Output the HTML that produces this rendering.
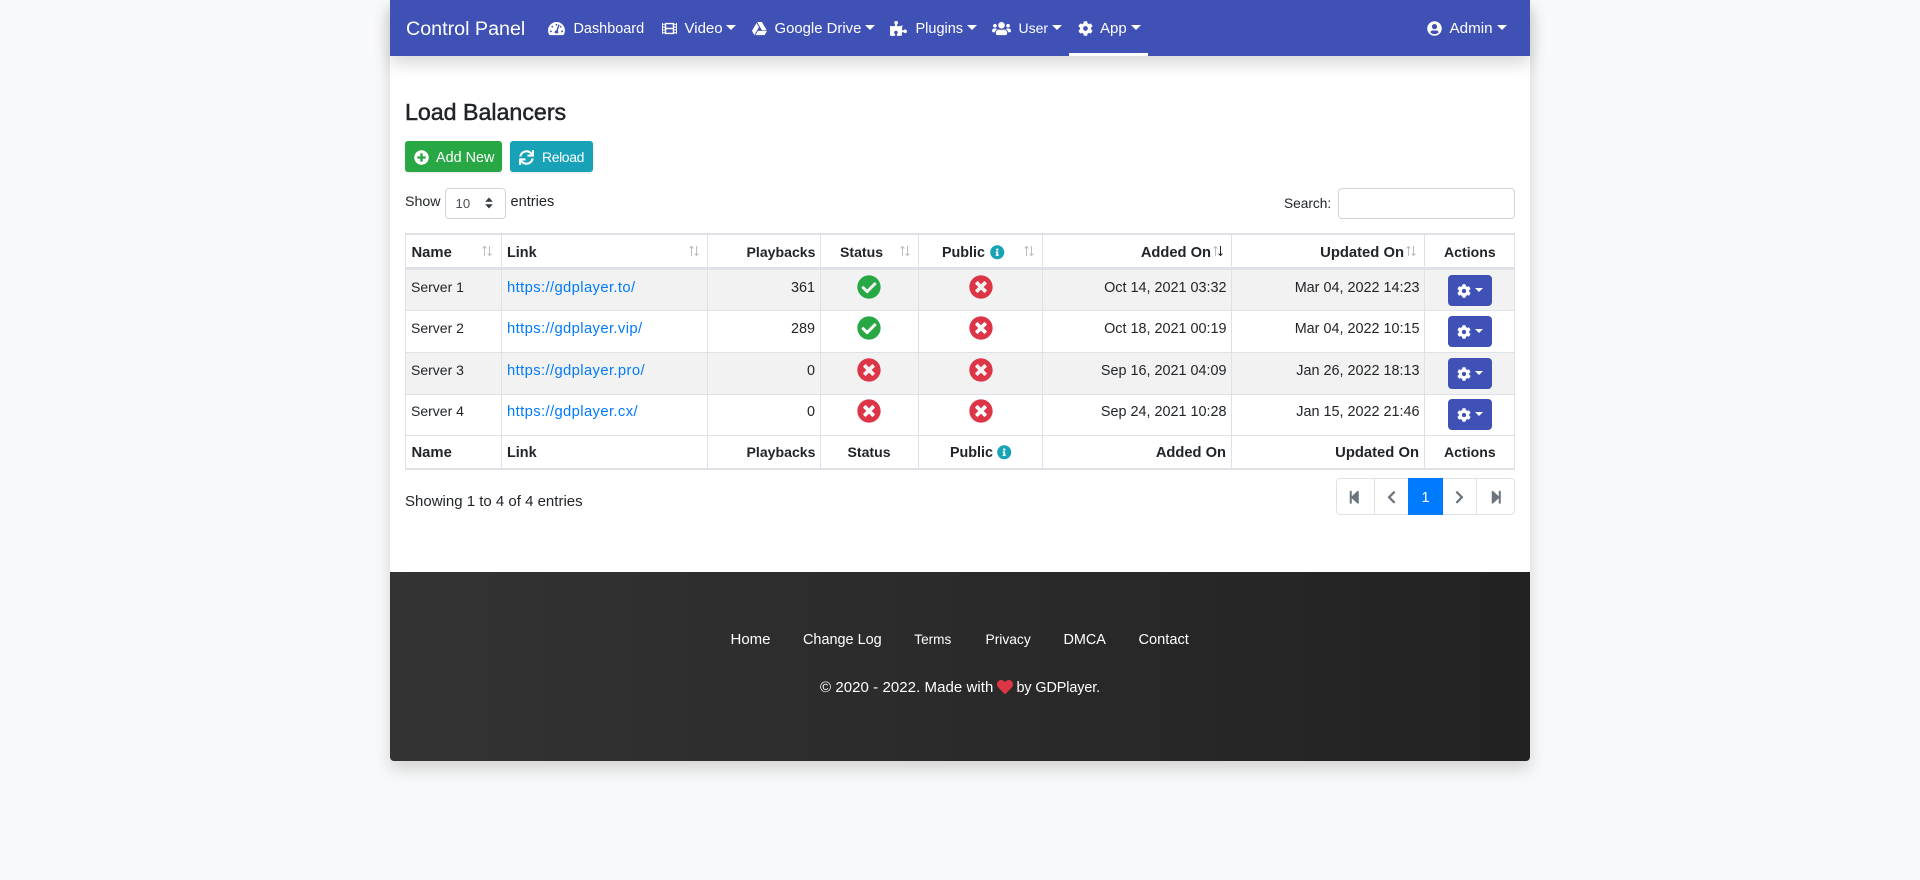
<!DOCTYPE html>
<html lang="en">
<head>
<meta charset="utf-8">
<title>Load Balancers - Control Panel</title>
<style>
html,body{margin:0;padding:0;background:#f8f9fa;width:1920px;height:880px;overflow:hidden;font-family:"Liberation Sans",sans-serif;color:#212529}
#wrap{position:absolute;left:390px;top:0;width:1140px;height:761px;background:#fff;border-radius:0 0 4px 4px;box-shadow:0 8px 16px rgba(0,0,0,.15)}
#nav{position:absolute;left:390px;top:0;width:1140px;height:56px;background:#3f51b5;box-shadow:0 8px 16px rgba(0,0,0,.15)}
#foot{position:absolute;left:390px;top:572px;width:1140px;height:189px;background:linear-gradient(90deg,#333,#222);border-radius:0 0 4px 4px}
.t{position:absolute;white-space:nowrap;line-height:20px;font-size:14px}
.r{text-align:right}
.w{color:#fff}
.b{font-weight:bold;color:#212529}
.l{color:#007bff;font-size:14.8px;letter-spacing:.38px}
.i{position:absolute;overflow:visible}
.c{position:absolute;width:0;height:0;border-left:5px solid transparent;border-right:5px solid transparent;border-top:5px solid #fff}
.s{border-left-width:4.2px;border-right-width:4.2px;border-top-width:4.4px}
.box{position:absolute}
.hl{position:absolute;left:405px;width:1110px;background:#dee2e6}
.vl{position:absolute;top:233px;height:237px;width:1px;background:#dee2e6}
.btn{position:absolute;border-radius:3px;box-shadow:0 1px 2px rgba(0,0,0,.1)}
.act{position:absolute;left:1448px;width:44px;height:31px;background:#3f51b5;border-radius:4px}
</style>
</head>
<body>
<svg width="0" height="0" style="position:absolute"><defs>
<path id="check" d="M504 256c0 136.967-111.033 248-248 248S8 392.967 8 256 119.033 8 256 8s248 111.033 248 248zM227.314 387.314l184-184c6.248-6.248 6.248-16.379 0-22.627l-22.627-22.627c-6.248-6.249-16.379-6.249-22.628 0L216 308.118l-70.059-70.059c-6.248-6.248-16.379-6.248-22.628 0l-22.627 22.627c-6.248 6.248-6.248 16.379 0 22.627l104 104c6.249 6.249 16.379 6.249 22.628.001z"/>
<path id="times" d="M256 8C119 8 8 119 8 256s111 248 248 248 248-111 248-248S393 8 256 8zm121.6 313.1c4.7 4.7 4.7 12.3 0 17L338 377.6c-4.7 4.7-12.3 4.7-17 0L256 312l-65.1 65.6c-4.7 4.7-12.3 4.7-17 0L134.4 338c-4.7-4.7-4.7-12.3 0-17l65.6-65-65.6-65.1c-4.7-4.7-4.7-12.3 0-17l39.6-39.6c4.7-4.7 12.3-4.7 17 0l65 65.7 65.1-65.6c4.7-4.7 12.3-4.7 17 0l39.6 39.6c4.7 4.7 4.7 12.3 0 17L312 256l65.6 65.1z"/>
<path id="plus" d="M256 8C119 8 8 119 8 256s111 248 248 248 248-111 248-248S393 8 256 8zm144 276c0 6.6-5.4 12-12 12h-92v92c0 6.6-5.4 12-12 12h-56c-6.6 0-12-5.4-12-12v-92h-92c-6.6 0-12-5.4-12-12v-56c0-6.6 5.4-12 12-12h92v-92c0-6.6 5.4-12 12-12h56c6.6 0 12 5.4 12 12v92h92c6.6 0 12 5.4 12 12v56z"/>
<path id="info" d="M256 8C119.043 8 8 119.083 8 256c0 136.997 111.043 248 248 248s248-111.003 248-248C504 119.083 392.957 8 256 8zm0 110c23.196 0 42 18.804 42 42s-18.804 42-42 42-42-18.804-42-42 18.804-42 42-42zm56 254c0 6.627-5.373 12-12 12h-88c-6.627 0-12-5.373-12-12v-24c0-6.627 5.373-12 12-12h12v-64h-12c-6.627 0-12-5.373-12-12v-24c0-6.627 5.373-12 12-12h64c6.627 0 12 5.373 12 12v100h12c6.627 0 12 5.373 12 12v24z"/>
<path id="cog" d="M487.4 315.7l-42.6-24.6c4.3-23.2 4.3-47 0-70.2l42.6-24.6c4.9-2.8 7.1-8.6 5.5-14-11.1-35.6-30-67.8-54.7-94.6-3.8-4.1-10-5.1-14.8-2.3L380.8 110c-17.9-15.4-38.5-27.3-60.8-35.1V25.8c0-5.6-3.9-10.5-9.4-11.7-36.7-8.2-74.3-7.8-109.2 0-5.5 1.2-9.4 6.1-9.4 11.7V75c-22.2 7.9-42.8 19.8-60.8 35.1L88.7 85.5c-4.9-2.8-11-1.9-14.8 2.3-24.7 26.7-43.6 58.9-54.7 94.6-1.7 5.4.6 11.2 5.5 14L67.3 221c-4.3 23.2-4.3 47 0 70.2l-42.6 24.6c-4.9 2.8-7.1 8.6-5.5 14 11.1 35.6 30 67.8 54.7 94.6 3.8 4.1 10 5.1 14.8 2.3l42.6-24.6c17.9 15.4 38.5 27.3 60.8 35.1v49.2c0 5.6 3.9 10.5 9.4 11.7 36.7 8.2 74.3 7.8 109.2 0 5.5-1.2 9.4-6.1 9.4-11.7v-49.2c22.2-7.9 42.8-19.8 60.8-35.1l42.6 24.6c4.9 2.8 11 1.9 14.8-2.3 24.7-26.7 43.6-58.9 54.7-94.6 1.5-5.5-.7-11.3-5.6-14.1zM256 336c-44.1 0-80-35.9-80-80s35.9-80 80-80 80 35.9 80 80-35.9 80-80 80z"/>
<path id="sync" d="M440.65 12.57l4 82.77A247.16 247.16 0 0 0 255.83 8C134.73 8 33.91 94.92 12.29 209.82A12 12 0 0 0 24.09 224h49.05a12 12 0 0 0 11.67-9.26 175.91 175.91 0 0 1 317-56.94l-101.46-4.86a12 12 0 0 0-12.57 12v47.41a12 12 0 0 0 12 12H500a12 12 0 0 0 12-12V12a12 12 0 0 0-12-12h-47.37a12 12 0 0 0-11.98 12.57zM255.83 432a175.61 175.61 0 0 1-146-77.8l101.8 4.87a12 12 0 0 0 12.57-12v-47.4a12 12 0 0 0-12-12H12a12 12 0 0 0-12 12V500a12 12 0 0 0 12 12h47.35a12 12 0 0 0 12-12.6l-4.15-82.57A247.17 247.17 0 0 0 255.83 504c121.11 0 221.93-86.92 243.55-201.82a12 12 0 0 0-11.8-14.18h-49.05a12 12 0 0 0-11.67 9.26A175.86 175.86 0 0 1 255.83 432z"/>
<path id="tach" d="M288 32C128.94 32 0 160.94 0 320c0 52.8 14.25 102.26 39.06 144.8 5.61 9.62 16.3 15.2 27.44 15.2h443c11.14 0 21.83-5.58 27.44-15.2C561.75 422.26 576 372.8 576 320c0-159.06-128.94-288-288-288zm0 64c14.71 0 26.58 10.13 30.32 23.65-1.11 2.26-2.64 4.23-3.45 6.67l-9.22 27.67c-5.13 3.49-10.97 6.01-17.64 6.01-17.67 0-32-14.33-32-32S270.33 96 288 96zM96 384c-17.67 0-32-14.33-32-32s14.33-32 32-32 32 14.33 32 32-14.33 32-32 32zm48-160c-17.67 0-32-14.33-32-32s14.33-32 32-32 32 14.33 32 32-14.33 32-32 32zm246.77-72.41l-61.33 184C343.13 347.33 352 364.54 352 384c0 11.72-3.38 22.55-8.88 32H232.88c-5.5-9.45-8.88-20.28-8.88-32 0-33.94 26.5-61.43 59.9-63.59l61.34-184.01c4.17-12.56 17.73-19.45 30.36-15.17 12.57 4.19 19.35 17.79 15.17 30.36zm14.66 57.2l15.52-46.55c3.47-1.29 7.13-2.23 11.05-2.23 17.67 0 32 14.33 32 32s-14.33 32-32 32c-11.38-.01-20.89-6.28-26.57-15.22zM480 384c-17.67 0-32-14.33-32-32s14.33-32 32-32 32 14.33 32 32-14.33 32-32 32z"/>
<path id="film" d="M488 64h-8v20c0 6.6-5.4 12-12 12h-40c-6.6 0-12-5.4-12-12V64H96v20c0 6.6-5.4 12-12 12H44c-6.6 0-12-5.4-12-12V64h-8C10.7 64 0 74.7 0 88v336c0 13.3 10.7 24 24 24h8v-20c0-6.6 5.4-12 12-12h40c6.6 0 12 5.4 12 12v20h320v-20c0-6.6 5.4-12 12-12h40c6.6 0 12 5.4 12 12v20h8c13.3 0 24-10.7 24-24V88c0-13.3-10.7-24-24-24zM96 372c0 6.6-5.4 12-12 12H44c-6.6 0-12-5.4-12-12v-40c0-6.6 5.4-12 12-12h40c6.6 0 12 5.4 12 12v40zm0-96c0 6.6-5.4 12-12 12H44c-6.6 0-12-5.4-12-12v-40c0-6.6 5.4-12 12-12h40c6.6 0 12 5.4 12 12v40zm0-96c0 6.6-5.4 12-12 12H44c-6.6 0-12-5.4-12-12v-40c0-6.6 5.4-12 12-12h40c6.6 0 12 5.4 12 12v40zm272 208c0 6.6-5.4 12-12 12H156c-6.6 0-12-5.4-12-12v-96c0-6.6 5.4-12 12-12h200c6.6 0 12 5.4 12 12v96zm0-168c0 6.6-5.4 12-12 12H156c-6.6 0-12-5.4-12-12v-96c0-6.6 5.4-12 12-12h200c6.6 0 12 5.4 12 12v96zm112 152c0 6.6-5.4 12-12 12h-40c-6.6 0-12-5.4-12-12v-40c0-6.6 5.4-12 12-12h40c6.6 0 12 5.4 12 12v40zm0-96c0 6.6-5.4 12-12 12h-40c-6.6 0-12-5.4-12-12v-40c0-6.6 5.4-12 12-12h40c6.6 0 12 5.4 12 12v40zm0-96c0 6.6-5.4 12-12 12h-40c-6.6 0-12-5.4-12-12v-40c0-6.6 5.4-12 12-12h40c6.6 0 12 5.4 12 12v40z"/>
<path id="drive" d="M339 314.9L175.4 32h161.2l163.6 282.9H339zm-137.5 23.6L120.9 480h310.5L512 338.5H201.5zM154.1 67.4L0 338.5 80.6 480 237 208.8 154.1 67.4z"/>
<path id="puzzle" d="M519.442 288.651c-41.519 0-59.5 31.593-82.058 31.593C377.409 320.244 432 144 432 144s-196.288 80-196.288-3.297c0-35.827 36.288-46.25 36.288-85.985C272 19.216 243.885 0 210.539 0c-34.654 0-66.366 18.891-66.366 56.346 0 41.364 31.711 59.277 31.711 81.75C175.885 207.719 0 166.758 0 166.758v333.237s178.635 41.047 178.635-28.662c0-22.473-40-40.107-40-81.471 0-37.456 29.25-56.346 63.577-56.346 33.673 0 61.788 19.216 61.788 54.717 0 39.735-36.288 50.158-36.288 85.985 0 60.803 129.675 25.73 181.23 25.73 0 0-34.725-120.101 25.827-120.101 35.962 0 46.423 36.152 86.308 36.152C556.712 416 576 387.99 576 354.443c0-34.199-18.962-65.792-56.558-65.792z"/>
<path id="users" d="M96 224c35.3 0 64-28.7 64-64s-28.7-64-64-64-64 28.7-64 64 28.7 64 64 64zm448 0c35.3 0 64-28.7 64-64s-28.7-64-64-64-64 28.7-64 64 28.7 64 64 64zm32 32h-64c-17.6 0-33.5 7.1-45.1 18.6 40.3 22.1 68.9 62 75.1 109.4h66c17.7 0 32-14.3 32-32v-32c0-35.3-28.7-64-64-64zm-256 0c61.9 0 112-50.1 112-112S381.9 32 320 32 208 82.1 208 144s50.1 112 112 112zm76.8 32h-8.3c-20.8 10-43.9 16-68.5 16s-47.6-6-68.5-16h-8.3C179.6 288 128 339.6 128 403.2V432c0 26.5 21.5 48 48 48h288c26.5 0 48-21.5 48-48v-28.8c0-63.6-51.6-115.2-115.2-115.2zm-223.7-13.4C161.5 263.1 145.6 256 128 256H64c-35.3 0-64 28.7-64 64v32c0 17.7 14.3 32 32 32h65.9c6.3-47.4 34.9-87.3 75.2-109.4z"/>
<path id="ucircle" d="M248 8C111 8 0 119 0 256s111 248 248 248 248-111 248-248S385 8 248 8zm0 96c48.6 0 88 39.4 88 88s-39.4 88-88 88-88-39.4-88-88 39.4-88 88-88zm0 344c-58.7 0-111.3-26.6-146.5-68.2 18.8-35.4 55.6-59.8 98.5-59.8 2.4 0 4.8.4 7.1 1.1 13 4.2 26.6 6.9 40.9 6.9 14.3 0 28-2.7 40.9-6.9 2.3-.7 4.7-1.1 7.1-1.1 42.9 0 79.7 24.4 98.5 59.8C359.3 421.4 306.7 448 248 448z"/>
<path id="heart" d="M462.3 62.6C407.5 15.9 326 24.3 275.7 76.2L256 96.5l-19.7-20.3C186.1 24.3 104.5 15.9 49.7 62.6c-62.8 53.6-66.1 149.8-9.9 207.9l193.5 199.8c12.5 12.9 32.8 12.9 45.3 0l193.5-199.8c56.3-58.1 53-154.3-9.8-207.9z"/>
<path id="sback" d="M64 468V44c0-6.6 5.4-12 12-12h48c6.6 0 12 5.4 12 12v176.4l195.5-181C352 20 384 34.3 384 64v384c0 29.7-32 44-52.5 24.6L136 292.7V468c0 6.6-5.4 12-12 12H76c-6.6 0-12-5.4-12-12z"/>
<path id="sfwd" d="M384 44v424c0 6.6-5.4 12-12 12h-48c-6.6 0-12-5.4-12-12V291.6l-195.5 181C95.9 492 64 477.6 64 448V64c0-29.7 32-44 52.5-24.6L312 219.3V44c0-6.6 5.4-12 12-12h48c6.6 0 12 5.4 12 12z"/>
<path id="cleft" d="M34.52 239.03L228.87 44.69c9.37-9.37 24.57-9.37 33.94 0l22.67 22.67c9.36 9.36 9.37 24.52.04 33.9L131.49 256l154.02 154.75c9.34 9.38 9.32 24.54-.04 33.9l-22.67 22.67c-9.37 9.37-24.57 9.37-33.94 0L34.52 272.97c-9.37-9.37-9.37-24.57 0-33.94z"/>
<path id="cright" d="M285.476 272.971L91.132 467.314c-9.373 9.373-24.569 9.373-33.941 0l-22.667-22.667c-9.357-9.357-9.375-24.522-.04-33.901L188.505 256 34.484 101.255c-9.335-9.379-9.317-24.544.04-33.901l22.667-22.667c9.373-9.373 24.569-9.373 33.941 0L285.475 239.03c9.373 9.372 9.373 24.568.001 33.941z"/>
<g id="updown"><path d="M2.5 11V1.5M.6 3.4 2.5 1.5 4.4 3.4" fill="none" stroke="#212529" stroke-width="1" opacity=".3"/><path d="M7.5 1v9.5M5.6 8.6 7.5 10.5 9.4 8.6" fill="none" stroke="#212529" stroke-width="1" opacity=".3"/></g>
<g id="updownd"><path d="M2.5 11V1.5M.6 3.4 2.5 1.5 4.4 3.4" fill="none" stroke="#212529" stroke-width="1" opacity=".3"/><path d="M7.5 1v9.5M5.6 8.6 7.5 10.5 9.4 8.6" fill="none" stroke="#212529" stroke-width="1"/></g>
</defs></svg>

<div id="wrap"></div>
<div id="foot"></div>
<div id="nav"></div>

<!-- NAVBAR -->
<div class="t w" style="left:406px;top:19px;font-size:19.7px">Control Panel</div>
<svg class="i" style="left:548px;top:20.5px" width="17" height="15" viewBox="0 0 576 512" fill="#fff"><use href="#tach"/></svg>
<div class="t w" style="left:573.5px;top:19px;font-size:14.45px">Dashboard</div>
<svg class="i" style="left:662px;top:21px" width="15" height="15" viewBox="0 0 512 512" fill="#fff"><use href="#film"/></svg>
<div class="t w" style="left:684.5px;top:19px;font-size:15px">Video</div>
<div class="c" style="left:725.5px;top:25px"></div>
<svg class="i" style="left:752px;top:21px" width="15" height="15" viewBox="0 0 512 512" fill="#fff"><use href="#drive"/></svg>
<div class="t w" style="left:774.5px;top:19px;font-size:14.9px">Google Drive</div>
<div class="c" style="left:864.5px;top:25px"></div>
<svg class="i" style="left:890px;top:21px" width="17" height="15" viewBox="0 0 576 512" fill="#fff"><use href="#puzzle"/></svg>
<div class="t w" style="left:915.5px;top:19px;font-size:14.5px">Plugins</div>
<div class="c" style="left:967px;top:25px"></div>
<svg class="i" style="left:992px;top:21px" width="19" height="15" viewBox="0 0 640 512" fill="#fff"><use href="#users"/></svg>
<div class="t w" style="left:1018.5px;top:18px;font-size:14px">User</div>
<div class="c" style="left:1052px;top:25px"></div>
<svg class="i" style="left:1077.5px;top:21px" width="15" height="15" viewBox="0 0 512 512" fill="#fff"><use href="#cog"/></svg>
<div class="t w" style="left:1100px;top:19px;font-size:15px">App</div>
<div class="c" style="left:1131px;top:25px"></div>
<div class="box" style="left:1069px;top:53px;width:79px;height:3px;background:#fff"></div>
<svg class="i" style="left:1426.5px;top:21px" width="15" height="15" viewBox="0 0 496 512" fill="#fff"><use href="#ucircle"/></svg>
<div class="t w" style="left:1449.5px;top:19px;font-size:15.2px">Admin</div>
<div class="c" style="left:1497px;top:25px"></div>

<!-- HEADING -->
<div class="t" style="left:405px;top:100px;font-size:23.2px;line-height:24px;-webkit-text-stroke:.5px #212529">Load Balancers</div>

<!-- BUTTONS -->
<div class="btn" style="left:405px;top:141px;width:97px;height:31px;background:#28a745"></div>
<svg class="i" style="left:413.5px;top:149.5px" width="15" height="15" viewBox="0 0 512 512" fill="#fff"><use href="#plus"/></svg>
<div class="t w" style="left:436px;top:148px;font-size:14.4px">Add New</div>
<div class="btn" style="left:510px;top:141px;width:83px;height:31px;background:#17a2b8"></div>
<svg class="i" style="left:519px;top:149.5px" width="15" height="15" viewBox="0 0 512 512" fill="#fff"><use href="#sync"/></svg>
<div class="t w" style="left:542px;top:147px;font-size:14px;letter-spacing:-.4px">Reload</div>

<!-- CONTROLS -->
<div class="t" style="left:405px;top:192px;font-size:14.2px">Show</div>
<div class="box" style="left:445px;top:188px;width:59px;height:29px;border:1px solid #ced4da;border-radius:4px;background:#fff"></div>
<div class="t" style="left:455.5px;top:194px;font-size:13.2px;color:#495057">10</div>
<svg class="i" style="left:485px;top:197px" width="8" height="12" viewBox="0 0 8 12" fill="#343a40"><path d="M4 .5 7.8 4.8H.2zM4 11.5.2 7.2h7.6z"/></svg>
<div class="t" style="left:510.5px;top:192px;font-size:14.6px">entries</div>
<div class="t" style="left:1284px;top:194px;font-size:13.7px">Search:</div>
<div class="box" style="left:1338px;top:188px;width:175px;height:29px;border:1px solid #ced4da;border-radius:4px;background:#fff"></div>

<!-- TABLE -->
<div class="box" style="left:405px;top:270px;width:1110px;height:40px;background:#f2f2f2"></div>
<div class="box" style="left:405px;top:353px;width:1110px;height:41px;background:#f2f2f2"></div>
<div class="hl" style="top:233px;height:2px"></div>
<div class="hl" style="top:267px;height:3px"></div>
<div class="hl" style="top:310px;height:1px"></div>
<div class="hl" style="top:352px;height:1px"></div>
<div class="hl" style="top:394px;height:1px"></div>
<div class="hl" style="top:435px;height:1px"></div>
<div class="hl" style="top:468px;height:2px"></div>
<div class="vl" style="left:405px"></div>
<div class="vl" style="left:501px"></div>
<div class="vl" style="left:707px"></div>
<div class="vl" style="left:820px"></div>
<div class="vl" style="left:918px"></div>
<div class="vl" style="left:1042px"></div>
<div class="vl" style="left:1231px"></div>
<div class="vl" style="left:1424px"></div>
<div class="vl" style="left:1514px"></div>

<!-- header -->
<div class="t b" style="left:411.5px;top:243px;font-size:14.8px">Name</div>
<svg class="i" style="left:482px;top:245px" width="10" height="12"><use href="#updown"/></svg>
<div class="t b" style="left:507px;top:243px;font-size:14.4px">Link</div>
<svg class="i" style="left:689px;top:245px" width="10" height="12"><use href="#updown"/></svg>
<div class="t b r" style="right:1104.5px;top:242px;font-size:14.1px">Playbacks</div>
<div class="t b" style="left:840px;top:242px;font-size:14.1px">Status</div>
<svg class="i" style="left:899.5px;top:245px" width="10" height="12"><use href="#updown"/></svg>
<div class="t b" style="left:942px;top:243px;font-size:14.3px">Public</div>
<svg class="i" style="left:989.5px;top:245px" width="14.5" height="14.5" viewBox="0 0 512 512" fill="#17a2b8"><use href="#info"/></svg>
<svg class="i" style="left:1023.5px;top:245px" width="10" height="12"><use href="#updown"/></svg>
<div class="t b r" style="right:709px;top:243px;font-size:14.7px">Added On</div>
<svg class="i" style="left:1213px;top:245px" width="10" height="12"><use href="#updownd"/></svg>
<div class="t b r" style="right:516px;top:243px;font-size:14.8px">Updated On</div>
<svg class="i" style="left:1406px;top:245px" width="10" height="12"><use href="#updown"/></svg>
<div class="t b" style="left:1444px;top:242px;font-size:14.1px">Actions</div>

<!-- rows -->
<div class="t" style="left:411px;top:277px">Server 1</div>
<div class="t l" style="left:507px;top:278px">https://gdplayer.to/</div>
<div class="t r" style="right:1105px;top:278px;font-size:14.4px">361</div>
<svg class="i" style="left:857px;top:275px" width="24" height="24" viewBox="0 0 512 512" fill="#28a745"><use href="#check"/></svg>
<svg class="i" style="left:968.5px;top:275px" width="24" height="24" viewBox="0 0 512 512" fill="#dc3545"><use href="#times"/></svg>
<div class="t r" style="right:693.5px;top:278px;font-size:14.4px">Oct 14, 2021 03:32</div>
<div class="t r" style="right:500.5px;top:278px;font-size:14.4px">Mar 04, 2022 14:23</div>
<div class="act" style="top:275px"></div>
<svg class="i" style="left:1456.5px;top:283.5px" width="14" height="14" viewBox="0 0 512 512" fill="#fff"><use href="#cog"/></svg>
<div class="c s" style="left:1475px;top:288px"></div>

<div class="t" style="left:411px;top:318px">Server 2</div>
<div class="t l" style="left:507px;top:319px">https://gdplayer.vip/</div>
<div class="t r" style="right:1105px;top:319px;font-size:14.4px">289</div>
<svg class="i" style="left:857px;top:316px" width="24" height="24" viewBox="0 0 512 512" fill="#28a745"><use href="#check"/></svg>
<svg class="i" style="left:968.5px;top:316px" width="24" height="24" viewBox="0 0 512 512" fill="#dc3545"><use href="#times"/></svg>
<div class="t r" style="right:693.5px;top:319px;font-size:14.4px">Oct 18, 2021 00:19</div>
<div class="t r" style="right:500.5px;top:319px;font-size:14.4px">Mar 04, 2022 10:15</div>
<div class="act" style="top:316px"></div>
<svg class="i" style="left:1456.5px;top:324.5px" width="14" height="14" viewBox="0 0 512 512" fill="#fff"><use href="#cog"/></svg>
<div class="c s" style="left:1475px;top:329px"></div>

<div class="t" style="left:411px;top:360px">Server 3</div>
<div class="t l" style="left:507px;top:361px">https://gdplayer.pro/</div>
<div class="t r" style="right:1105px;top:361px;font-size:14.4px">0</div>
<svg class="i" style="left:857px;top:358px" width="24" height="24" viewBox="0 0 512 512" fill="#dc3545"><use href="#times"/></svg>
<svg class="i" style="left:968.5px;top:358px" width="24" height="24" viewBox="0 0 512 512" fill="#dc3545"><use href="#times"/></svg>
<div class="t r" style="right:693.5px;top:361px;font-size:14.4px">Sep 16, 2021 04:09</div>
<div class="t r" style="right:500.5px;top:361px;font-size:14.4px">Jan 26, 2022 18:13</div>
<div class="act" style="top:358px"></div>
<svg class="i" style="left:1456.5px;top:366.5px" width="14" height="14" viewBox="0 0 512 512" fill="#fff"><use href="#cog"/></svg>
<div class="c s" style="left:1475px;top:371px"></div>

<div class="t" style="left:411px;top:401px">Server 4</div>
<div class="t l" style="left:507px;top:402px">https://gdplayer.cx/</div>
<div class="t r" style="right:1105px;top:402px;font-size:14.4px">0</div>
<svg class="i" style="left:857px;top:399px" width="24" height="24" viewBox="0 0 512 512" fill="#dc3545"><use href="#times"/></svg>
<svg class="i" style="left:968.5px;top:399px" width="24" height="24" viewBox="0 0 512 512" fill="#dc3545"><use href="#times"/></svg>
<div class="t r" style="right:693.5px;top:402px;font-size:14.4px">Sep 24, 2021 10:28</div>
<div class="t r" style="right:500.5px;top:402px;font-size:14.4px">Jan 15, 2022 21:46</div>
<div class="act" style="top:399px"></div>
<svg class="i" style="left:1456.5px;top:407.5px" width="14" height="14" viewBox="0 0 512 512" fill="#fff"><use href="#cog"/></svg>
<div class="c s" style="left:1475px;top:412px"></div>

<!-- table footer -->
<div class="t b" style="left:411.5px;top:443px;font-size:14.8px">Name</div>
<div class="t b" style="left:507px;top:443px;font-size:14.4px">Link</div>
<div class="t b r" style="right:1104.5px;top:442px;font-size:14.1px">Playbacks</div>
<div class="t b" style="left:847.5px;top:442px;font-size:14.1px">Status</div>
<div class="t b" style="left:950px;top:443px;font-size:14.3px">Public</div>
<svg class="i" style="left:997px;top:445px" width="14.5" height="14.5" viewBox="0 0 512 512" fill="#17a2b8"><use href="#info"/></svg>
<div class="t b r" style="right:694px;top:443px;font-size:14.7px">Added On</div>
<div class="t b r" style="right:501px;top:443px;font-size:14.8px">Updated On</div>
<div class="t b" style="left:1444px;top:442px;font-size:14.1px">Actions</div>

<!-- INFO + PAGINATION -->
<div class="t" style="left:405px;top:492px;font-size:15px">Showing 1 to 4 of 4 entries</div>
<div class="box" style="left:1336px;top:478px;width:177px;height:35px;border:1px solid #dee2e6;border-radius:4px;background:#fff"></div>
<div class="box" style="left:1374px;top:478px;width:1px;height:37px;background:#dee2e6"></div>
<div class="box" style="left:1476px;top:478px;width:1px;height:37px;background:#dee2e6"></div>
<div class="box" style="left:1408px;top:478px;width:35px;height:37px;background:#007bff"></div>
<svg class="i" style="left:1347px;top:490px" width="14.5" height="14.5" viewBox="0 0 448 512" fill="#6c757d"><use href="#sback"/></svg>
<svg class="i" style="left:1387px;top:490px" width="9" height="14.5" viewBox="0 0 320 512" fill="#6c757d"><use href="#cleft"/></svg>
<div class="t w" style="left:1421.5px;top:488px;font-size:14.4px">1</div>
<svg class="i" style="left:1455px;top:490px" width="9" height="14.5" viewBox="0 0 320 512" fill="#6c757d"><use href="#cright"/></svg>
<svg class="i" style="left:1488.5px;top:490px" width="14.5" height="14.5" viewBox="0 0 448 512" fill="#6c757d"><use href="#sfwd"/></svg>

<!-- FOOTER -->
<div class="t w" style="left:730.5px;top:630px;font-size:15px">Home</div>
<div class="t w" style="left:803px;top:630px;font-size:14.45px">Change Log</div>
<div class="t w" style="left:914.3px;top:630px;font-size:13.6px">Terms</div>
<div class="t w" style="left:985.5px;top:630px;font-size:13.8px">Privacy</div>
<div class="t w" style="left:1063.5px;top:630px;font-size:14.4px">DMCA</div>
<div class="t w" style="left:1138.5px;top:630px;font-size:14.6px">Contact</div>
<div class="t w" style="left:820px;top:678px;font-size:15px;letter-spacing:.06px">© 2020 - 2022. Made with</div>
<svg class="i" style="left:997px;top:679px" width="16" height="16" viewBox="0 0 512 512" fill="#dc3545"><use href="#heart"/></svg>
<div class="t w" style="left:1016.5px;top:678px;font-size:14.4px;letter-spacing:-.1px">by GDPlayer.</div>
</body>
</html>
